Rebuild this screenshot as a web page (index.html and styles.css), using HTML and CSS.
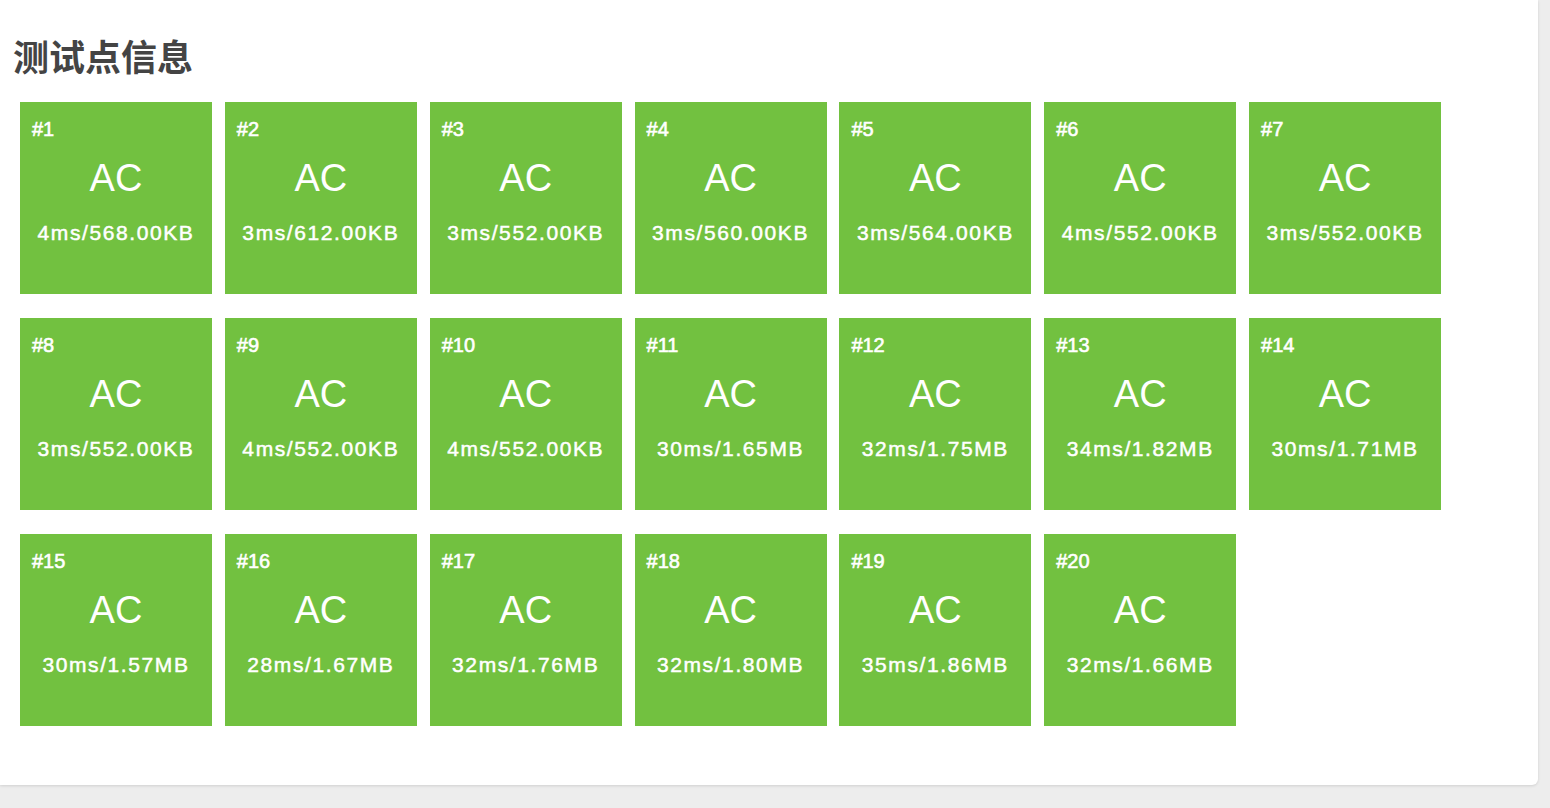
FILE: index.html
```html
<!DOCTYPE html>
<html lang="zh-CN">
<head>
<meta charset="utf-8">
<title>测试点信息</title>
<link rel="stylesheet" href="styles.css">
</head>
<body>
<section class="card">
  <h2 class="card-title">测试点信息</h2>
  <div class="cases">
    <div class="case"><div class="case-id">#1</div><div class="case-status">AC</div><div class="case-usage">4ms/568.00KB</div></div>
    <div class="case"><div class="case-id">#2</div><div class="case-status">AC</div><div class="case-usage">3ms/612.00KB</div></div>
    <div class="case"><div class="case-id">#3</div><div class="case-status">AC</div><div class="case-usage">3ms/552.00KB</div></div>
    <div class="case"><div class="case-id">#4</div><div class="case-status">AC</div><div class="case-usage">3ms/560.00KB</div></div>
    <div class="case"><div class="case-id">#5</div><div class="case-status">AC</div><div class="case-usage">3ms/564.00KB</div></div>
    <div class="case"><div class="case-id">#6</div><div class="case-status">AC</div><div class="case-usage">4ms/552.00KB</div></div>
    <div class="case"><div class="case-id">#7</div><div class="case-status">AC</div><div class="case-usage">3ms/552.00KB</div></div>
    <div class="case"><div class="case-id">#8</div><div class="case-status">AC</div><div class="case-usage">3ms/552.00KB</div></div>
    <div class="case"><div class="case-id">#9</div><div class="case-status">AC</div><div class="case-usage">4ms/552.00KB</div></div>
    <div class="case"><div class="case-id">#10</div><div class="case-status">AC</div><div class="case-usage">4ms/552.00KB</div></div>
    <div class="case"><div class="case-id">#11</div><div class="case-status">AC</div><div class="case-usage">30ms/1.65MB</div></div>
    <div class="case"><div class="case-id">#12</div><div class="case-status">AC</div><div class="case-usage">32ms/1.75MB</div></div>
    <div class="case"><div class="case-id">#13</div><div class="case-status">AC</div><div class="case-usage">34ms/1.82MB</div></div>
    <div class="case"><div class="case-id">#14</div><div class="case-status">AC</div><div class="case-usage">30ms/1.71MB</div></div>
    <div class="case"><div class="case-id">#15</div><div class="case-status">AC</div><div class="case-usage">30ms/1.57MB</div></div>
    <div class="case"><div class="case-id">#16</div><div class="case-status">AC</div><div class="case-usage">28ms/1.67MB</div></div>
    <div class="case"><div class="case-id">#17</div><div class="case-status">AC</div><div class="case-usage">32ms/1.76MB</div></div>
    <div class="case"><div class="case-id">#18</div><div class="case-status">AC</div><div class="case-usage">32ms/1.80MB</div></div>
    <div class="case"><div class="case-id">#19</div><div class="case-status">AC</div><div class="case-usage">35ms/1.86MB</div></div>
    <div class="case"><div class="case-id">#20</div><div class="case-status">AC</div><div class="case-usage">32ms/1.66MB</div></div>
  </div>
</section>
</body>
</html>
```

FILE: styles.css
```css
html, body {
  margin: 0;
  padding: 0;
}

body {
  background: #ededed;
  font-family: "Liberation Sans", Arial, "Noto Sans CJK SC", sans-serif;
  height: 808px;
  overflow: hidden;
}

.card {
  width: 1538px;
  height: 785px;
  box-sizing: border-box;
  background: #fff;
  border-radius: 0 0 6px 0;
  box-shadow: 0 1px 3px rgba(0, 0, 0, 0.12);
  padding: 33px 13px 0 13px;
}

.card-title {
  margin: 0;
  font-family: "Noto Sans CJK SC", sans-serif;
  font-size: 36px;
  line-height: 44px;
  font-weight: 700;
  color: #444;
}

.cases {
  display: flex;
  flex-wrap: wrap;
  column-gap: 12.85px;
  row-gap: 24px;
  margin-top: 25px;
  padding-left: 7px;
}

.case {
  width: 192px;
  height: 192px;
  box-sizing: border-box;
  background: #72c140;
  color: #fff;
  padding: 17px 12px 0 12px;
  display: flex;
  flex-direction: column;
}

/* medium-weight look: regular face with a thin white outline */
.case-id {
  font-size: 20px;
  line-height: 21px;
  -webkit-text-stroke: 0.6px #fff;
}

.case-status {
  margin-top: 16px;
  font-size: 38px;
  line-height: 44px;
  text-align: center;
}

.case-usage {
  margin-top: 21px;
  font-size: 21px;
  line-height: 24px;
  letter-spacing: 1.6px;
  -webkit-text-stroke: 0.5px #fff;
  text-align: center;
  white-space: nowrap;
}
```
